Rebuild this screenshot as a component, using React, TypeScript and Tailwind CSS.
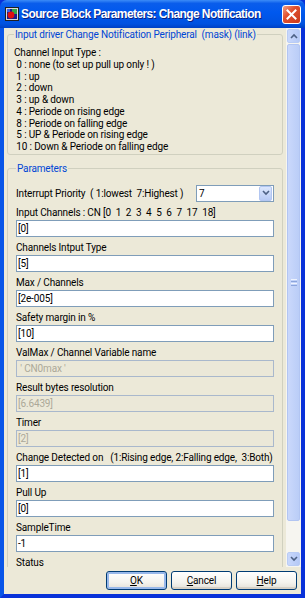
import React from 'react';

const channelTypes = [
    'Channel Input Type :',
    ' 0 : none (to set up pull up only ! )',
    ' 1 : up',
    ' 2 : down',
    ' 3 : up & down',
    ' 4 : Periode on rising edge',
    ' 8 : Periode on falling edge',
    ' 5 : UP & Periode on rising edge',
    ' 10 : Down & Periode on falling edge',
];

const params = [
    { label: 'Input Channels : CN [0  1  2  3  4  5  6  7  17  18]', value: '[0]' },
    { label: 'Channels Intput Type', value: '[5]' },
    { label: 'Max / Channels', value: '[2e-005]' },
    { label: 'Safety margin in %', value: '[10]' },
    { label: 'ValMax / Channel Variable name', value: " ' CN0max '", disabled: true },
    { label: 'Result bytes resolution', value: '[6.6439]', disabled: true },
    { label: 'Timer', value: '[2]', disabled: true },
    { label: 'Change Detected on   (1:Rising edge, 2:Falling edge,  3:Both)', value: '[1]' },
    { label: 'Pull Up', value: '[0]' },
    { label: 'SampleTime', value: '-1' },
];

const Chevron = ({ up }: { up?: boolean }) => (
    <svg width="8" height="6" viewBox="0 0 8 6">
        <path d={up ? 'M1 5 L4 2 L7 5' : 'M1 1 L4 4 L7 1'} fill="none" stroke="#4D6185" strokeWidth="1.6" />
    </svg>
);

const XpButton = ({ label, mnemonic, primary }: { label: string; mnemonic: number; primary?: boolean }) => (
    <button
        className={`w-[61px] h-[19px] rounded-[3px] border border-[#003C74] bg-[linear-gradient(to_bottom,#FFFFFF_0%,#F4F3EE_60%,#E3E1D8_100%)] leading-[17px] text-black ${primary ? 'shadow-[inset_0_0_0_2px_#98B8EA]' : 'shadow-[inset_0_-2px_0_#D6D0C5]'}`}
    >
        {label.slice(0, mnemonic)}
        <span className="underline">{label[mnemonic]}</span>
        {label.slice(mnemonic + 1)}
    </button>
);

export default function App() {
    return (
        <div className="w-[305px] h-[598px] flex flex-col font-['Roboto','Liberation_Sans',Arial,sans-serif] text-[10px] tracking-[-0.15px] text-black overflow-hidden bg-[#0831D9]">
            {/* title bar */}
            <div className="h-[28px] shrink-0 flex items-center pl-[5px] pr-[4px] rounded-t-[7px] bg-[linear-gradient(to_bottom,#3C8CF7_0%,#0A5DEB_12%,#0058EE_45%,#0052E0_85%,#0041C4_100%)]">
                <svg width="14" height="14" viewBox="0 0 14 14" className="shrink-0">
                    <rect x="0.5" y="0.5" width="13" height="13" fill="#D8D8D8" stroke="#202020" />
                    <rect x="2" y="2" width="10" height="10" fill="#1C1C8C" />
                    <rect x="7" y="2" width="5" height="5" fill="#2FA64A" />
                    <circle cx="6" cy="8" r="3.4" fill="#E01010" />
                    <rect x="2" y="2" width="3" height="3" fill="#4060E0" />
                </svg>
                <div className="ml-[2px] flex-1 font-['Liberation_Sans',Arial,sans-serif] font-bold text-[12px] tracking-[-0.6px] text-white [text-shadow:1px_1px_0_#0A1F80] whitespace-nowrap">
                    Source Block Parameters: Change Notification
                </div>
                <div className="w-[19px] h-[19px] rounded-[3px] border border-white bg-[linear-gradient(135deg,#F0A088_0%,#E0502E_40%,#C8381A_100%)] flex items-center justify-center">
                    <svg width="11" height="11" viewBox="0 0 11 11">
                        <path d="M1.5 1.5 L9.5 9.5 M9.5 1.5 L1.5 9.5" stroke="white" strokeWidth="2" strokeLinecap="square" />
                    </svg>
                </div>
            </div>

            {/* body */}
            <div className="flex-1 min-h-0 flex flex-col border-l-4 border-r-4 border-b-4 border-l-[#0855E8] border-r-[#0831D9] border-b-[#0831D9] bg-[#ECE9D8]">
                <div className="flex-1 min-h-0 flex">
                    <div className="flex-1 min-w-0 overflow-hidden px-[3px]">
                        <fieldset className="min-w-0 border border-[#D0D0BF] rounded-[3px] pl-[6px] pr-[6px] pt-[6px] pb-[1px]">
                            <legend className="px-[1px] text-[#0046D5] leading-[13px] whitespace-pre">
                                Input driver Change Notification Peripheral  (mask) (link)
                            </legend>
                            {channelTypes.map((line) => (
                                <div key={line} className="leading-[11.75px] whitespace-pre">
                                    {line}
                                </div>
                            ))}
                        </fieldset>

                        <fieldset className="min-w-0 mt-[7px] border border-[#D0D0BF] rounded-[3px] px-[8px] pt-[10px] pb-[10px]">
                            <legend className="px-[1px] text-[#0046D5] leading-[13px]">Parameters</legend>
                            <div className="flex items-center h-[17px]">
                                <span className="whitespace-pre flex-1 min-w-0">Interrupt Priority  ( 1:lowest  7:Highest )</span>
                                <div className="w-[78px] shrink-0 h-[17px] border border-[#7F9DB9] bg-white flex items-center">
                                    <span className="flex-1 pl-[2px] leading-[15px]">7</span>
                                    <div className="w-[13px] h-[15px] mr-[1px] rounded-[2px] bg-[linear-gradient(to_bottom,#DCE7FD,#B7CAF5)] border border-[#B2C6F1] flex items-center justify-center">
                                        <Chevron />
                                    </div>
                                </div>
                            </div>
                            {params.map((p) => (
                                <div key={p.label} className="mt-[4px]">
                                    <div className="h-[14px] leading-[14px] whitespace-pre">{p.label}</div>
                                    <div
                                        className={`h-[17px] border pl-[1px] leading-[15px] whitespace-pre ${p.disabled ? 'border-[#A9B8CC] bg-[#EBE8D8] text-[#ACA899]' : 'border-[#7F9DB9] bg-white'}`}
                                    >
                                        {p.value}
                                    </div>
                                </div>
                            ))}
                            <div className="mt-[4px] h-[14px] leading-[14px]">Status</div>
                        </fieldset>
                    </div>

                    {/* scrollbar */}
                    <div className="w-[15px] shrink-0 flex flex-col bg-[#F6F5F0] pt-[1px] pb-[1px]">
                        <div className="h-[14px] mx-[1px] rounded-[2px] bg-[linear-gradient(to_right,#C9D8FC,#B5C9F6)] border border-[#B9CCF5] flex items-center justify-center">
                            <Chevron up />
                        </div>
                        <div className="flex-1 flex flex-col pt-[1px]">
                            <div className="h-[477px] mx-[1px] rounded-[2px] bg-[linear-gradient(to_right,#CAD8FB,#BACDF7)] border border-[#B2C5F2] flex items-center justify-center">
                                <div className="flex flex-col gap-[1px]">
                                    <div className="w-[6px] h-[1px] bg-[#EEF3FE]" />
                                    <div className="w-[6px] h-[1px] bg-[#8CA5DC]" />
                                    <div className="w-[6px] h-[1px] bg-[#EEF3FE]" />
                                    <div className="w-[6px] h-[1px] bg-[#8CA5DC]" />
                                </div>
                            </div>
                        </div>
                        <div className="h-[14px] mx-[1px] rounded-[2px] bg-[linear-gradient(to_right,#C9D8FC,#B5C9F6)] border border-[#B9CCF5] flex items-center justify-center">
                            <Chevron />
                        </div>
                    </div>
                </div>

                {/* buttons */}
                <div className="h-[27px] shrink-0 flex items-start justify-end gap-[4px] pt-[4px] pr-[4px]">
                    <XpButton label="OK" mnemonic={0} primary />
                    <XpButton label="Cancel" mnemonic={0} />
                    <XpButton label="Help" mnemonic={0} />
                </div>
            </div>
        </div>
    );
}
